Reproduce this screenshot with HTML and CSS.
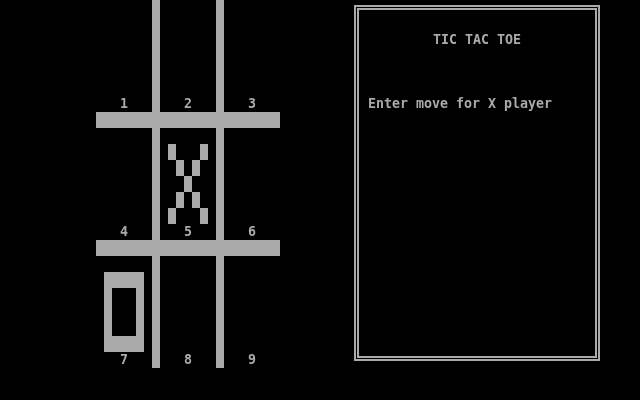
FILE: index.html
```html
<!DOCTYPE html>
<html>
<head>
<meta charset="utf-8">
<link rel="stylesheet" href="styles.css">
</head>
<body>
<div class="screen">
  <div class="board">
    <div class="vbar vbar-a"></div>
    <div class="vbar vbar-b"></div>
    <div class="hbar hbar-a"></div>
    <div class="hbar hbar-b"></div>

    <div class="cell c1"><div class="mark"></div><span class="num">1</span></div>
    <div class="cell c2"><div class="mark"></div><span class="num">2</span></div>
    <div class="cell c3"><div class="mark"></div><span class="num">3</span></div>
    <div class="cell c4"><div class="mark"></div><span class="num">4</span></div>
    <div class="cell c5">
      <div class="mark">
        <svg class="xmark" viewBox="0 0 5 5" preserveAspectRatio="none" width="40" height="80">
          <rect x="0" y="0" width="1" height="1"/>
          <rect x="4" y="0" width="1" height="1"/>
          <rect x="1" y="1" width="1" height="1"/>
          <rect x="3" y="1" width="1" height="1"/>
          <rect x="2" y="2" width="1" height="1"/>
          <rect x="1" y="3" width="1" height="1"/>
          <rect x="3" y="3" width="1" height="1"/>
          <rect x="0" y="4" width="1" height="1"/>
          <rect x="4" y="4" width="1" height="1"/>
        </svg>
      </div>
      <span class="num">5</span>
    </div>
    <div class="cell c6"><div class="mark"></div><span class="num">6</span></div>
    <div class="cell c7"><div class="mark"><div class="omark"></div></div><span class="num">7</span></div>
    <div class="cell c8"><div class="mark"></div><span class="num">8</span></div>
    <div class="cell c9"><div class="mark"></div><span class="num">9</span></div>
  </div>

  <div class="panel">
    <div class="panel-inner">
      <div class="title">TIC TAC TOE</div>
      <div class="prompt">Enter move for X player</div>
    </div>
  </div>
</div>
</body>
</html>
```

FILE: styles.css
```css
html, body {
  margin: 0;
  padding: 0;
  background: #000;
}

body {
  width: 640px;
  height: 400px;
  overflow: hidden;
  color: #aaaaaa;
  font-family: "DejaVu Sans Mono", "Liberation Mono", monospace;
  font-weight: bold;
  font-size: 13.3px;
  line-height: 16px;
}

.screen {
  display: flex;
  align-items: flex-start;
  padding-left: 96px;
  will-change: transform;
}

.board {
  display: grid;
  grid-template-columns: 56px 8px 56px 8px 56px;
  grid-template-rows: 112px 16px 112px 16px 112px;
  width: 184px;
}

.vbar, .hbar {
  background: #aaaaaa;
}

.vbar {
  grid-row: 1 / 6;
}
.vbar-a { grid-column: 2; }
.vbar-b { grid-column: 4; }

.hbar {
  grid-column: 1 / 6;
}
.hbar-a { grid-row: 2; }
.hbar-b { grid-row: 4; }

.cell {
  display: flex;
  flex-direction: column;
  align-items: center;
  padding-top: 16px;
  box-sizing: border-box;
}

.c1 { grid-row: 1; grid-column: 1; }
.c2 { grid-row: 1; grid-column: 3; }
.c3 { grid-row: 1; grid-column: 5; }
.c4 { grid-row: 3; grid-column: 1; }
.c5 { grid-row: 3; grid-column: 3; }
.c6 { grid-row: 3; grid-column: 5; }
.c7 { grid-row: 5; grid-column: 1; }
.c8 { grid-row: 5; grid-column: 3; }
.c9 { grid-row: 5; grid-column: 5; }

.mark {
  width: 40px;
  height: 80px;
}

.num {
  display: block;
  width: 8px;
  height: 16px;
  text-align: center;
}

.xmark {
  display: block;
  fill: #aaaaaa;
  shape-rendering: crispEdges;
}

.omark {
  width: 24px;
  height: 48px;
  border-style: solid;
  border-color: #aaaaaa;
  border-width: 16px 8px;
}

.panel {
  margin-left: 74px;
  margin-top: 5px;
  width: 246px;
  height: 356px;
  box-sizing: border-box;
  border: 2px solid #aaaaaa;
  padding: 1px;
}

.panel-inner {
  height: 100%;
  box-sizing: border-box;
  border: 2px solid #aaaaaa;
  padding: 22px 0 0 9px;
}

.title {
  width: 218px;
  text-align: center;
  white-space: pre;
}

.prompt {
  margin-top: 48px;
  white-space: pre;
}
```
